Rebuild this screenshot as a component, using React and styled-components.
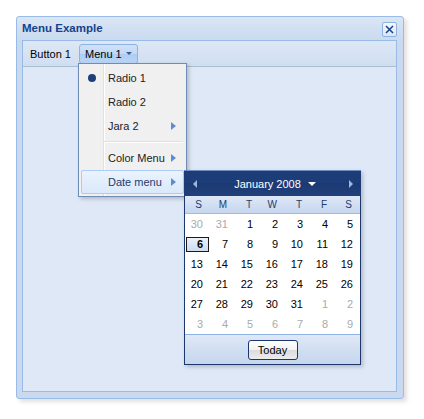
import React from 'react';
import styled, { createGlobalStyle } from 'styled-components';

const GlobalStyle = createGlobalStyle`
	html, body {
		margin: 0;
		padding: 0;
		background: #ffffff;
	}
	body {
		font-family: "Liberation Sans", Arial, sans-serif;
		font-size: 11px;
	}
`;

const Page = styled.div`
	width: 424px;
	height: 419px;
	padding: 16px 0 0 16px;
	box-sizing: border-box;
`;

const Window = styled.div`
	position: relative;
	width: 388px;
	height: 383px;
	box-sizing: border-box;
	border: 1px solid #99bbe8;
	border-radius: 3px;
	background: linear-gradient(#dae6f5 0, #c9d9ef 24px, #cad9ee 100%);
	padding: 0 6px 6px 5px;
	display: flex;
	flex-direction: column;
	box-shadow: 3px 3px 4px rgba(0, 0, 0, 0.12);
`;

const TitleBar = styled.div`
	height: 23px;
	display: flex;
	align-items: center;
	justify-content: space-between;
`;

const Title = styled.span`
	font-weight: bold;
	font-size: 11.5px;
	color: #15428b;
	margin-top: -1px;
`;

const CloseButton = styled.div`
	width: 13px;
	height: 13px;
	border: 1px solid #8db2e3;
	border-radius: 2px;
	background: linear-gradient(#f4f8fd, #dbe6f5);
	display: flex;
	align-items: center;
	justify-content: center;
	margin-top: 1px;
`;

const Panel = styled.div`
	flex: 1;
	border: 1px solid #99bbe8;
	background: #dfe8f6;
	display: flex;
	flex-direction: column;
`;

const Toolbar = styled.div`
	height: 25px;
	border-bottom: 1px solid #a9bfd3;
	background: linear-gradient(#dde8f6, #d0def0);
	display: flex;
	align-items: center;
	padding: 0 1px;
	gap: 2px;
`;

const ToolButton = styled.div`
	height: 20px;
	box-sizing: border-box;
	display: flex;
	align-items: center;
	gap: 4px;
	padding: 0 5px;
	color: #000;
	border: 1px solid ${p => (p.$active ? '#8fb2e0' : 'transparent')};
	border-radius: 3px;
	background: ${p => (p.$active ? 'linear-gradient(#cfe1f8 0, #c2d9f6 50%, #aecdf3 50%, #b9d5f6 100%)' : 'transparent')};
`;

const Menu = styled.div`
	position: absolute;
	left: 61px;
	top: 46px;
	width: 109px;
	box-sizing: border-box;
	border: 1px solid #718bb7;
	background: #f0f0f0 linear-gradient(to right, transparent 24px, #e0e0e0 24px, #e0e0e0 25px, #ffffff 25px, #ffffff 26px, transparent 26px);
	padding: 2px;
	box-shadow: 2px 2px 4px rgba(0, 0, 0, 0.2);
`;

const MenuItem = styled.div`
	height: 24px;
	box-sizing: border-box;
	display: flex;
	align-items: center;
	padding-left: 26px;
	padding-right: 7px;
	position: relative;
	border: 1px solid ${p => (p.$active ? '#aaccf6' : 'transparent')};
	border-radius: 2px;
	background: ${p => (p.$active ? 'linear-gradient(#ebf3fd, #d9e8fb)' : 'transparent')};
	color: ${p => (p.$active ? '#233d6d' : '#222')};
`;

const ItemText = styled.span`
	flex: 1;
`;

const RadioDot = styled.span`
	position: absolute;
	left: 6px;
	top: 7px;
	width: 8px;
	height: 8px;
	border-radius: 50%;
	background: #1e3f7a;
`;

const SubArrow = styled.span`
	width: 0;
	height: 0;
	border-top: 4px solid transparent;
	border-bottom: 4px solid transparent;
	border-left: 5px solid #5f8ccd;
`;

const Separator = styled.div`
	height: 8px;
	display: flex;
	align-items: center;
	padding-left: 23px;
	padding-right: 1px;
	&::after {
		content: '';
		flex: 1;
		height: 1px;
		background: #e0e0e0;
		border-bottom: 1px solid #fff;
	}
`;

const Picker = styled.div`
	position: absolute;
	left: 167px;
	top: 153px;
	width: 177px;
	box-sizing: border-box;
	border: 1px solid #1b376c;
	border-top: 0;
	background: #fff;
	box-shadow: 2px 2px 4px rgba(0, 0, 0, 0.2);
`;

const PickerHeader = styled.div`
	height: 26px;
	box-sizing: border-box;
	border-top: 1px solid #6f8bbf;
	background: linear-gradient(#1d3d78 0, #1d3d78 12px, #1b3a74 12px, #213f79 100%);
	display: flex;
	align-items: center;
	justify-content: space-between;
	padding: 0 8px 0 9px;
	color: #fff;
	margin: 0 -1px;
`;

const NavArrow = styled.span`
	width: 0;
	height: 0;
	border-top: 4px solid transparent;
	border-bottom: 4px solid transparent;
	${p => (p.$dir === 'left' ? 'border-right: 4px solid #9fb7e0;' : 'border-left: 4px solid #9fb7e0;')}
`;

const MonthLabel = styled.span`
	display: flex;
	align-items: center;
	gap: 7px;
	font-size: 11px;
	margin-left: 4px;
`;

const DownArrow = styled.span`
	width: 0;
	height: 0;
	border-left: ${p => p.$size || 4}px solid transparent;
	border-right: ${p => p.$size || 4}px solid transparent;
	border-top: ${p => p.$size || 4}px solid ${p => p.$color || '#fff'};
`;

const DayGrid = styled.div`
	display: grid;
	grid-template-columns: repeat(7, 25px);
`;

const DayHead = styled.div`
	height: 18px;
	box-sizing: border-box;
	border-bottom: 1px solid #a3bad9;
	background: linear-gradient(#dfe8f6, #c5d6ee);
	font-size: 10px;
	color: #233d6d;
	display: flex;
	align-items: center;
	justify-content: flex-end;
	padding-right: 8px;
`;

const DayCell = styled.div`
	height: 20px;
	display: flex;
	align-items: center;
	justify-content: center;
`;

const DayNum = styled.span`
	width: 23px;
	height: 15px;
	box-sizing: border-box;
	display: flex;
	align-items: center;
	justify-content: flex-end;
	padding-right: 5px;
	color: ${p => (p.$muted ? '#aaaaaa' : '#000')};
	font-weight: ${p => (p.$today ? 'bold' : 'normal')};
	border: 1px solid ${p => (p.$today ? '#1a1a1a' : 'transparent')};
	background: ${p => (p.$today ? 'linear-gradient(#eaf1fb, #cddcf1)' : 'transparent')};
`;

const PickerFooter = styled.div`
	height: 29px;
	border-top: 1px solid #8db2e3;
	background: linear-gradient(#dfe8f6, #c5d6ee);
	display: flex;
	align-items: center;
	justify-content: center;
`;

const TodayButton = styled.div`
	width: 50px;
	height: 20px;
	box-sizing: border-box;
	border: 1px solid #1b3670;
	border-radius: 3px;
	background: linear-gradient(#ffffff 0, #f2f2f2 50%, #dcdcdc 51%, #ececec 100%);
	display: flex;
	align-items: center;
	justify-content: center;
	color: #000;
	margin-top: 1px;
`;

const days = [
	[30, 31, 1, 2, 3, 4, 5],
	[6, 7, 8, 9, 10, 11, 12],
	[13, 14, 15, 16, 17, 18, 19],
	[20, 21, 22, 23, 24, 25, 26],
	[27, 28, 29, 30, 31, 1, 2],
	[3, 4, 5, 6, 7, 8, 9],
];

function isMuted(row, value) {
	if (row === 0 && value > 20) return true;
	if (row >= 4 && value < 15) return true;
	return false;
}

function DatePicker() {
	return (
		<Picker>
			<PickerHeader>
				<NavArrow $dir="left" />
				<MonthLabel>
					January 2008
					<DownArrow />
				</MonthLabel>
				<NavArrow $dir="right" />
			</PickerHeader>
			<DayGrid>
				{['S', 'M', 'T', 'W', 'T', 'F', 'S'].map((d, i) => (
					<DayHead key={i}>{d}</DayHead>
				))}
				{days.map((week, r) =>
					week.map((d, c) => (
						<DayCell key={r + '-' + c}>
							<DayNum $muted={isMuted(r, d)} $today={r === 1 && c === 0}>{d}</DayNum>
						</DayCell>
					))
				)}
			</DayGrid>
			<PickerFooter>
				<TodayButton>Today</TodayButton>
			</PickerFooter>
		</Picker>
	);
}

export default function App() {
	return (
		<Page>
			<GlobalStyle />
			<Window>
				<TitleBar>
					<Title>Menu Example</Title>
					<CloseButton>
						<svg width="9" height="9" viewBox="0 0 9 9">
							<path d="M1 1 L8 8 M8 1 L1 8" stroke="#15428b" strokeWidth="1.5" />
						</svg>
					</CloseButton>
				</TitleBar>
				<Panel>
					<Toolbar>
						<ToolButton>Button 1</ToolButton>
						<ToolButton $active>
							Menu 1
							<DownArrow $color="#3c5a8a" $size={3} />
						</ToolButton>
					</Toolbar>
				</Panel>

				<Menu>
					<MenuItem>
						<RadioDot />
						<ItemText>Radio 1</ItemText>
					</MenuItem>
					<MenuItem>
						<ItemText>Radio 2</ItemText>
					</MenuItem>
					<MenuItem>
						<ItemText>Jara 2</ItemText>
						<SubArrow />
					</MenuItem>
					<Separator />
					<MenuItem>
						<ItemText>Color Menu</ItemText>
						<SubArrow />
					</MenuItem>
					<MenuItem $active>
						<ItemText>Date menu</ItemText>
						<SubArrow />
					</MenuItem>
				</Menu>

				<DatePicker />
			</Window>
		</Page>
	);
}
